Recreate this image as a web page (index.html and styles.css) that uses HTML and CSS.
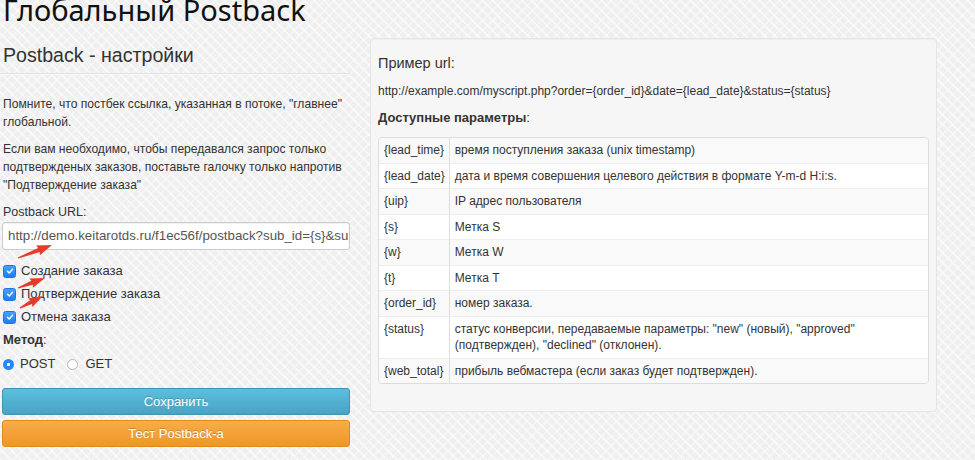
FILE: index.html
```html
<!DOCTYPE html>
<html lang="ru">
<head>
<meta charset="utf-8">
<title>Глобальный Postback</title>
<link rel="stylesheet" href="styles.css">
</head>
<body>
<div class="page">
  <div class="left">
    <h1 class="title">Глобальный Postback</h1>
    <h2 class="subtitle">Postback - настройки</h2>
    <hr class="rule">
    <p class="text">Помните, что постбек ссылка, указанная в потоке, "главнее" глобальной.</p>
    <p class="text">Если вам необходимо, чтобы передавался запрос только подтвержденых заказов, поставьте галочку только напротив "Подтверждение заказа"</p>
    <label class="field-label">Postback URL:</label>
    <div class="url-input">http://demo.keitarotds.ru/f1ec56f/postback?sub_id={s}&amp;sub_id={s}</div>
    <div class="checks">
      <label class="check"><span class="cb"><svg viewBox="0 0 12 12" width="12" height="12"><path d="M3 6.2 L5.1 8.3 L9 3.8" fill="none" stroke="#fff" stroke-width="1.7" stroke-linecap="round" stroke-linejoin="round"/></svg></span>Создание заказа</label>
      <label class="check"><span class="cb"><svg viewBox="0 0 12 12" width="12" height="12"><path d="M3 6.2 L5.1 8.3 L9 3.8" fill="none" stroke="#fff" stroke-width="1.7" stroke-linecap="round" stroke-linejoin="round"/></svg></span>Подтверждение заказа</label>
      <label class="check"><span class="cb"><svg viewBox="0 0 12 12" width="12" height="12"><path d="M3 6.2 L5.1 8.3 L9 3.8" fill="none" stroke="#fff" stroke-width="1.7" stroke-linecap="round" stroke-linejoin="round"/></svg></span>Отмена заказа</label>
    </div>
    <div class="method-label"><b>Метод</b>:</div>
    <div class="radios">
      <label class="radio"><span class="rb rb-on"></span>POST</label>
      <label class="radio"><span class="rb"></span>GET</label>
    </div>
    <button class="btn btn-save">Сохранить</button>
    <button class="btn btn-test">Тест Postback-а</button>
    <svg class="arrows" width="80" height="330" viewBox="0 0 80 330">
      <g fill="#e53b2c">
        <polygon transform="translate(18 258) rotate(-20.9)" points="0,-0.6 22.4,-2.2 21.4,-5.2 36.4,0 21.4,5.2 22.4,2.2 0,0.6"/>
        <polygon transform="translate(18 288) rotate(-20.3)" points="0,-0.6 15,-2.2 14,-5 28.8,0 14,5 15,2.2 0,0.6"/>
        <polygon transform="translate(20 308) rotate(-27.6)" points="0,-0.6 12.5,-2.1 11.5,-4.8 25.9,0 11.5,4.8 12.5,2.1 0,0.6"/>
      </g>
    </svg>
  </div>
  <div class="right">
    <div class="well">
      <p class="ex-label">Пример url:</p>
      <p class="ex-url">http://example.com/myscript.php?order={order_id}&amp;date={lead_date}&amp;status={status}</p>
      <p class="params-label"><b>Доступные параметры</b>:</p>
      <table class="params">
        <tr><td class="key">{lead_time}</td><td>время поступления заказа (unix timestamp)</td></tr>
        <tr><td class="key">{lead_date}</td><td>дата и время совершения целевого действия в формате Y-m-d H:i:s.</td></tr>
        <tr><td class="key">{uip}</td><td>IP адрес пользователя</td></tr>
        <tr><td class="key">{s}</td><td>Метка S</td></tr>
        <tr><td class="key">{w}</td><td>Метка W</td></tr>
        <tr><td class="key">{t}</td><td>Метка T</td></tr>
        <tr><td class="key">{order_id}</td><td>номер заказа.</td></tr>
        <tr><td class="key">{status}</td><td>статус конверсии, передаваемые параметры: "new" (новый), "approved" (подтвержден), "declined" (отклонен).</td></tr>
        <tr><td class="key">{web_total}</td><td>прибыль вебмастера (если заказ будет подтвержден).</td></tr>
      </table>
    </div>
  </div>
</div>
</body>
</html>
```

FILE: styles.css
```css
html, body {
  margin: 0;
  padding: 0;
}
body {
  font-family: "Liberation Sans", Arial, sans-serif;
  font-size: 13px;
  line-height: 18px;
  color: #333;
  background-color: #efefef;
  background-image:
    repeating-linear-gradient(45deg, rgba(255,255,255,0.55) 0 2px, transparent 2px 7px),
    repeating-linear-gradient(-45deg, rgba(255,255,255,0.35) 0 2px, transparent 2px 7px);
  overflow: hidden;
  height: 460px;
}
.page {
  display: grid;
  grid-template-columns: 348px 567px;
  column-gap: 20px;
  padding-left: 2px;
  align-items: start;
}
.left {
  position: relative;
  display: flex;
  flex-direction: column;
  align-items: stretch;
}
.title {
  font-family: "Noto Sans", "Open Sans", sans-serif;
  font-weight: 400;
  font-size: 29px;
  line-height: 29px;
  margin: -5px 0 0 1px;
  color: #111;
  white-space: nowrap;
}
.subtitle {
  font-weight: 400;
  font-size: 19.6px;
  line-height: 24px;
  margin: 19px 0 0 1px;
  color: #333;
}
.rule {
  border: 0;
  border-top: 1px solid #e2e2e2;
  border-bottom: 1px solid #f8f8f8;
  margin: 6px 0 0 -2px;
  width: 350px;
}
.text {
  margin: 0 -4px 9px 1px;
  font-size: 12.1px;
}
.text:first-of-type {
  margin-top: 20px;
}
.field-label {
  margin: 0 0 0 1px;
  font-size: 12.5px;
  line-height: 18px;
}
.url-input {
  margin-top: 1px;
  height: 26px;
  line-height: 26px;
  border: 1px solid #ccc;
  border-radius: 3px;
  background: #fff;
  padding: 0 5px;
  font-size: 13.3px;
  color: #555;
  white-space: nowrap;
  overflow: hidden;
  box-shadow: inset 0 1px 1px rgba(0,0,0,0.06);
}
.checks {
  margin-top: 12px;
  display: flex;
  flex-direction: column;
  gap: 5px;
}
.check {
  display: flex;
  align-items: center;
  gap: 5px;
  height: 18px;
  font-size: 13px;
  margin-left: 1px;
}
.cb {
  width: 11px;
  height: 11px;
  border-radius: 2.5px;
  background: linear-gradient(#4ba0f7, #1f7ef0);
  display: flex;
  align-items: center;
  justify-content: center;
  border: 0.5px solid #1c74de;
}
.cb svg {
  width: 10px;
  height: 10px;
}
.method-label {
  margin: 5px 0 0 1px;
  font-size: 13px;
}
.radios {
  margin-top: 6px;
  display: flex;
  gap: 12px;
  margin-left: 1px;
}
.radio {
  display: flex;
  align-items: center;
  gap: 6px;
  height: 18px;
  font-size: 13px;
}
.radio + .radio {
  gap: 7px;
}
.rb {
  width: 11px;
  height: 11px;
  border-radius: 50%;
  border: 1px solid #b5b5b5;
  background: #fff;
  box-sizing: border-box;
}
.rb-on {
  border: 0;
  background: radial-gradient(circle, #fff 0 1.6px, #2a86f2 2px);
}
.btn {
  display: block;
  width: 100%;
  height: 27px;
  border-radius: 3px;
  font-family: "Liberation Sans", Arial, sans-serif;
  font-size: 13px;
  color: #fff;
  cursor: pointer;
  text-shadow: 0 -1px 0 rgba(0,0,0,0.2);
  padding: 0;
}
.btn-save {
  margin-top: 15px;
  background: linear-gradient(#5bbfdd, #4aa3c3);
  border: 1px solid #3d95b5;
}
.btn-test {
  margin-top: 5px;
  background: linear-gradient(#f7ad48, #f09528);
  border: 1px solid #e08a20;
}
.arrows {
  position: absolute;
  left: -2px;
  top: 0;
  pointer-events: none;
}
.right {
  margin-top: 38px;
}
.well {
  background: #f6f6f6;
  border: 1px solid #e4e4e4;
  border-radius: 4px;
  padding: 15px 7px 27px 7px;
  box-shadow: inset 0 1px 1px rgba(0,0,0,0.03);
}
.well p {
  margin: 0 0 9px 0;
}
.ex-label {
  font-size: 14.5px;
  line-height: 19px;
}
.ex-url {
  font-size: 12px;
  line-height: 18px;
}
.params-label {
  font-size: 13px;
}
.params {
  width: 100%;
  border-collapse: separate;
  border-spacing: 0;
  border: 1px solid #ddd;
  border-radius: 4px;
  margin-top: 10px;
  font-size: 12px;
  line-height: 16.5px;
  overflow: hidden;
}
.params td {
  padding: 4px 4px 4px 5px;
  vertical-align: top;
  border-top: 1px solid #eee;
  background: #fff;
}
.params tr:first-child td {
  border-top: 0;
}
.params tr:nth-child(odd) td {
  background: #f9f9f9;
}
.params td + td {
  border-left: 1px solid #ddd;
}
.params .key {
  width: 60px;
  white-space: nowrap;
}
```
